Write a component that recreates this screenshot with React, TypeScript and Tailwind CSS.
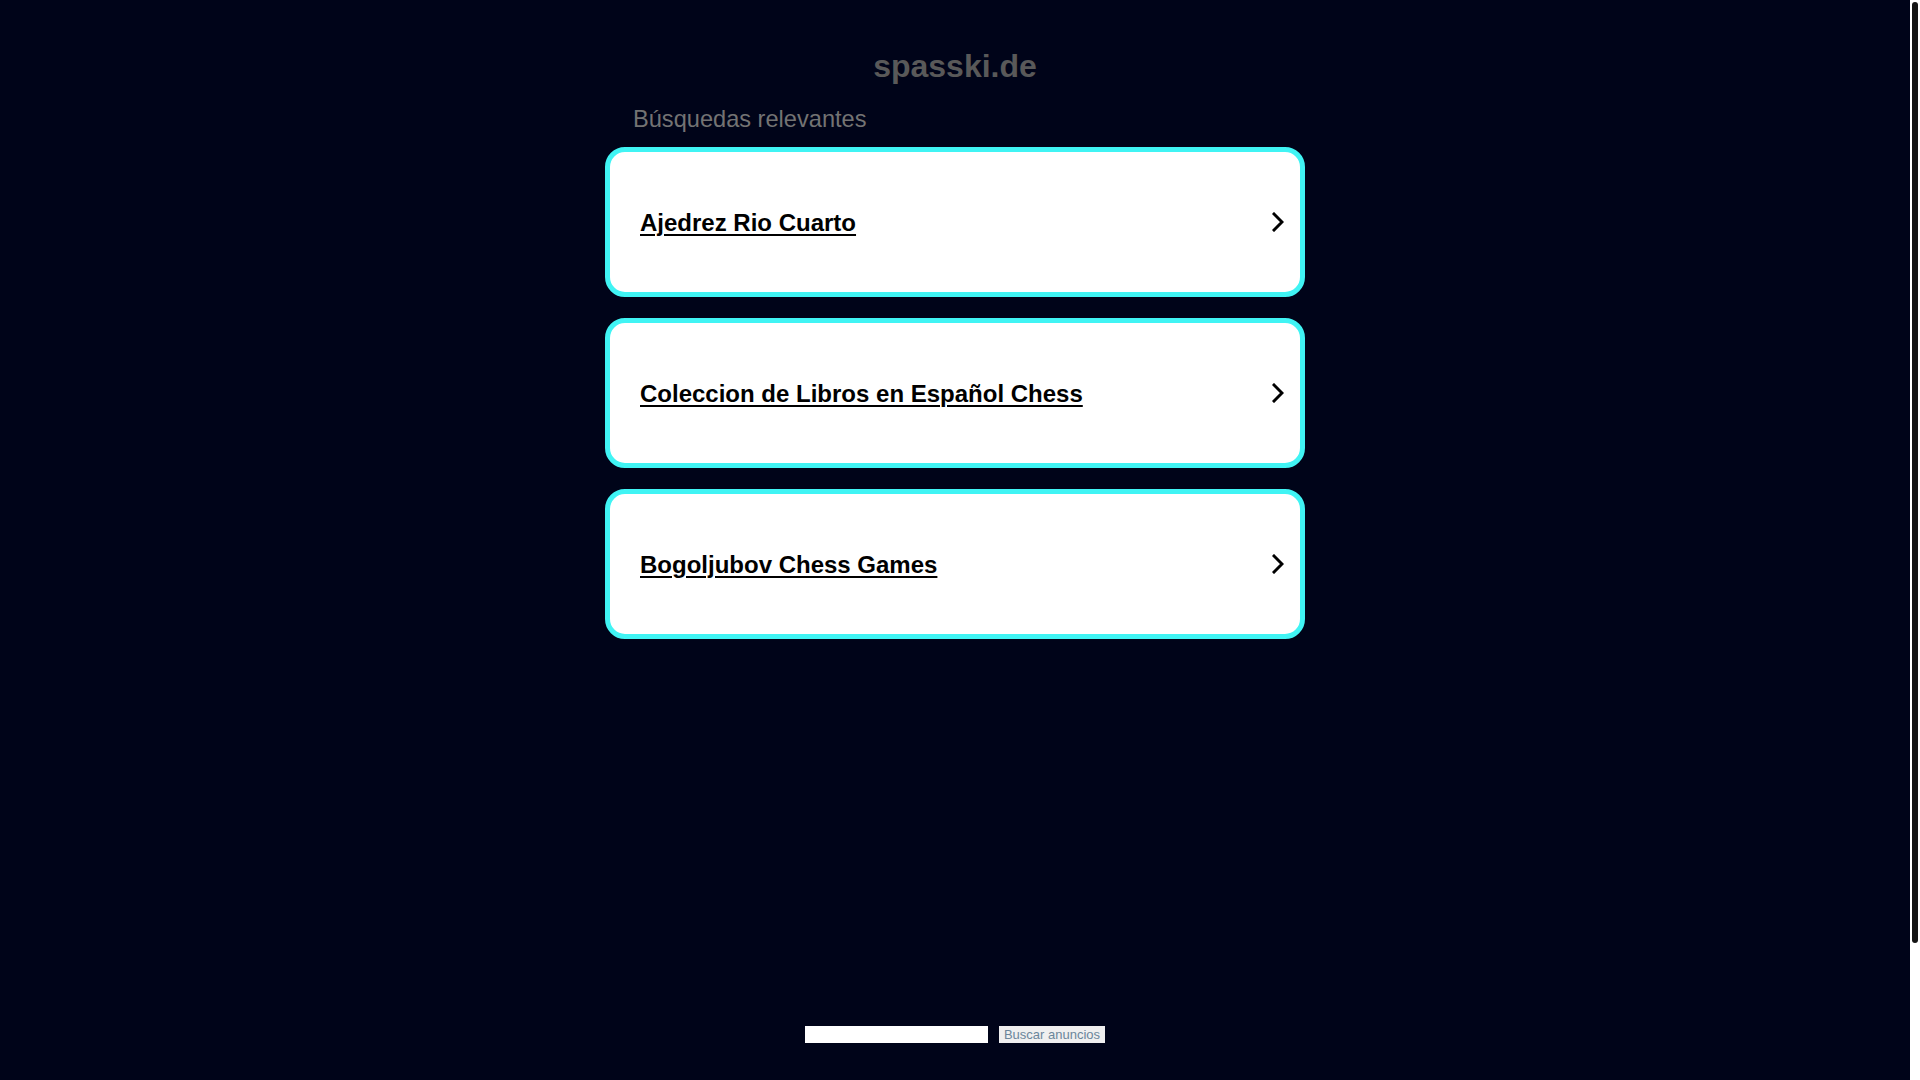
const links = ['Ajedrez Rio Cuarto', 'Coleccion de Libros en Español Chess', 'Bogoljubov Chess Games'];

const Chevron = () => (
  <svg width="12" height="20" viewBox="0 0 12 20" fill="none" className="shrink-0">
    <path d="M2 2 L10 10 L2 18" stroke="#000" strokeWidth="3" strokeLinecap="square" />
  </svg>
);

export default function App() {
  return (
    <div className="flex h-screen overflow-hidden bg-[#000419] font-['Liberation_Sans',Arial,sans-serif]">
      <main className="flex-1 pt-[48px]">
        <div className="mx-auto w-[700px]">
          <h1 className="text-center text-[32px] font-bold leading-[36px] text-[#595959]">spasski.de</h1>
          <h2 className="mt-[21px] pl-[28px] text-[23.6px] leading-[28px] text-[#737373]">Búsquedas relevantes</h2>

          {/* Related searches */}
          <div className="mt-[14px] flex flex-col gap-[21px]">
            {links.map((label) => (
              <a
                key={label}
                href="#"
                className="flex h-[150px] items-center justify-between rounded-[20px] border-[5px] border-[#40f4f4] bg-white pl-[30px] pr-[16px]"
              >
                <span className="pt-[2px] text-[24px] font-bold leading-[28px] text-black underline decoration-2 underline-offset-[3px]">
                  {label}
                </span>
                <Chevron />
              </a>
            ))}
          </div>
        </div>

        {/* Search form */}
        <form className="mt-[387px] flex justify-center gap-[11px]" onSubmit={(e) => e.preventDefault()}>
          <input type="text" className="h-[17px] w-[183px] bg-white outline-none" />
          <button
            type="submit"
            className="h-[17px] w-[106px] bg-[#efefef] text-[13px] leading-[17px] text-[#6b869b]"
          >
            Buscar anuncios
          </button>
        </form>
      </main>

      {/* Page scrollbar */}
      <div className="w-[10px] shrink-0 bg-white px-[2px] pt-[2px]">
        <div className="h-[941px] rounded-full bg-[#141414]" />
      </div>
    </div>
  );
}
